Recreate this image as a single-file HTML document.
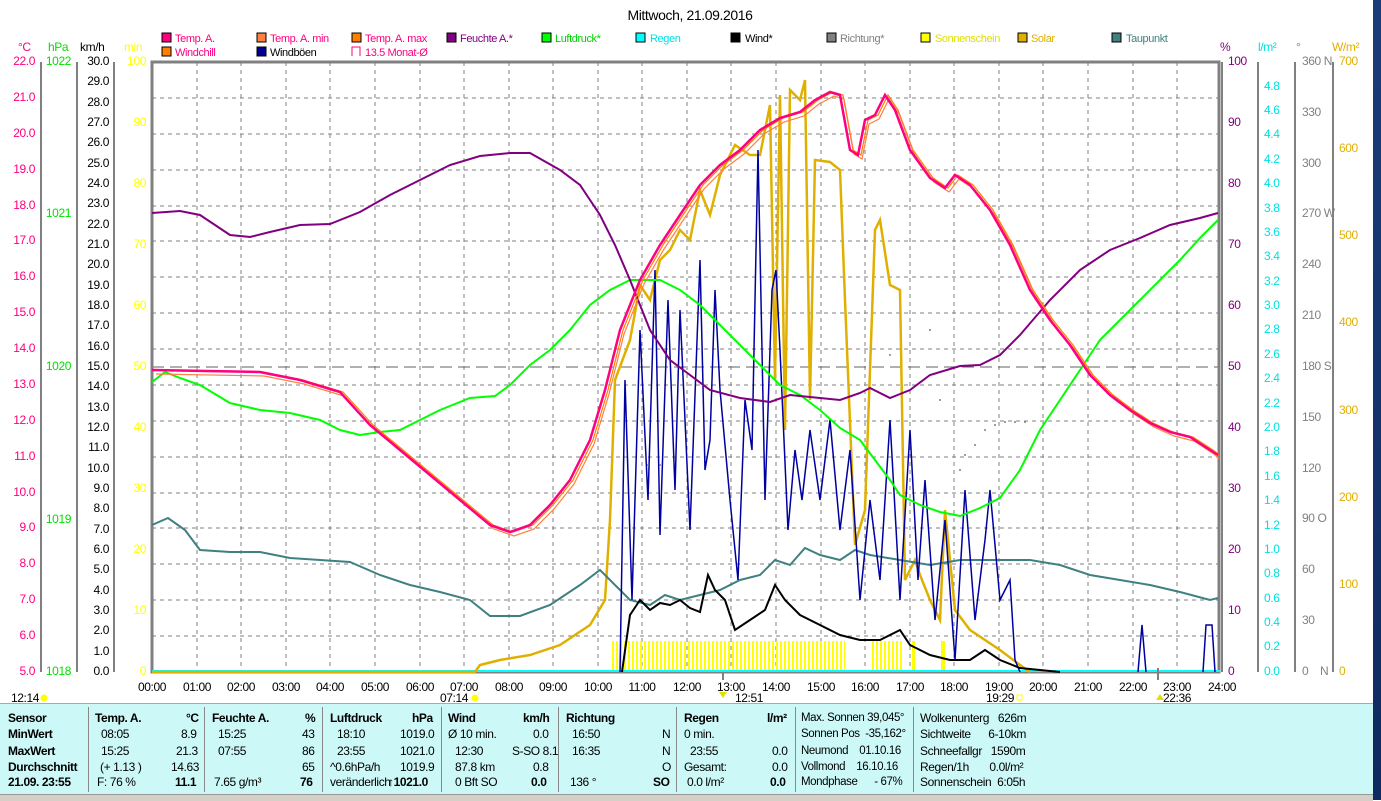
<!DOCTYPE html>
<html><head><meta charset="utf-8"><style>
html,body{margin:0;padding:0;width:1381px;height:800px;overflow:hidden;background:#fff;font-family:"Liberation Sans",sans-serif}
svg{position:absolute;left:0;top:0}
svg text{letter-spacing:-0.4px}
#tbl{position:absolute;left:0;top:703px;width:1373px;height:91px;background:#ccf8f8;border-top:1px solid #aaa}
#tbl span{position:absolute;font-size:12px;color:#000;white-space:nowrap;line-height:14px;letter-spacing:-0.4px}
#tbl .b{font-weight:bold}
.sep{position:absolute;top:3px;width:1px;height:85px;background:#888}
#status{position:absolute;left:0;top:794px;width:1373px;height:6px;background:#d4d0c8;border-top:1px solid #999}
#desk{position:absolute;left:1373px;top:0;width:8px;height:800px;background:linear-gradient(#1a3d7a,#0e2a60)}
</style></head><body>
<svg width="1381" height="800" font-family="Liberation Sans, sans-serif" font-size="12">
<text x="690" y="20" text-anchor="middle" font-size="14">Mittwoch, 21.09.2016</text>
<g font-size="11">
<rect x="162" y="33" width="9" height="9" fill="#ff0080" stroke="#000"/><text x="175" y="42" fill="#ff0080">Temp. A.</text>
<rect x="257" y="33" width="9" height="9" fill="#ff8040" stroke="#000"/><text x="270" y="42" fill="#ff0080">Temp. A. min</text>
<rect x="352" y="33" width="9" height="9" fill="#ff8000" stroke="#000"/><text x="365" y="42" fill="#ff0080">Temp. A. max</text>
<rect x="447" y="33" width="9" height="9" fill="#800080" stroke="#000"/><text x="460" y="42" fill="#800080">Feuchte A.*</text>
<rect x="542" y="33" width="9" height="9" fill="#00ff00" stroke="#000"/><text x="555" y="42" fill="#00d000">Luftdruck*</text>
<rect x="636" y="33" width="9" height="9" fill="#00ffff" stroke="#000"/><text x="650" y="42" fill="#00e0e0">Regen</text>
<rect x="731" y="33" width="9" height="9" fill="#000" stroke="#000"/><text x="745" y="42" fill="#000">Wind*</text>
<rect x="827" y="33" width="9" height="9" fill="#808080" stroke="#000"/><text x="840" y="42" fill="#808080">Richtung*</text>
<rect x="921" y="33" width="9" height="9" fill="#ffff00" stroke="#000"/><text x="935" y="42" fill="#e0e000">Sonnenschein</text>
<rect x="1018" y="33" width="9" height="9" fill="#e0b000" stroke="#000"/><text x="1031" y="42" fill="#e0b000">Solar</text>
<rect x="1112" y="33" width="9" height="9" fill="#408080" stroke="#000"/><text x="1126" y="42" fill="#408080">Taupunkt</text>
<rect x="162" y="47" width="9" height="9" fill="#ff8000" stroke="#000"/><text x="175" y="56" fill="#ff0080">Windchill</text>
<rect x="257" y="47" width="9" height="9" fill="#000090" stroke="#000"/><text x="270" y="56" fill="#000">Windböen</text>
<path d="M352 56V47h8v9" fill="none" stroke="#ff0080"/><text x="365" y="56" fill="#ff0080">13.5 Monat-Ø</text>
</g>
<text x="18" y="51" fill="#ff0080">°C</text><text x="48" y="51" fill="#00e000">hPa</text><text x="80" y="51">km/h</text><text x="124" y="51" fill="#ffff00">min</text>
<text x="1220" y="51" fill="#800080">%</text><text x="1258" y="51" fill="#00e0e0">l/m²</text><text x="1296" y="51" fill="#808080">°</text><text x="1332" y="51" fill="#e0b000">W/m²</text>
<g stroke="#808080" stroke-width="2">
<line x1="41" y1="62" x2="41" y2="672"/><line x1="77" y1="62" x2="77" y2="672"/><line x1="114" y1="62" x2="114" y2="672"/>
<line x1="1258" y1="62" x2="1258" y2="672"/><line x1="1295" y1="62" x2="1295" y2="672"/><line x1="1333" y1="62" x2="1333" y2="672"/>
</g>
<g stroke="#808080" stroke-dasharray="4,4" stroke-width="1">
<path d="M197 62V672M241 62V672M286 62V672M330 62V672M375 62V672M420 62V672M464 62V672M509 62V672M553 62V672M598 62V672M642 62V672M687 62V672M731 62V672M776 62V672M821 62V672M865 62V672M910 62V672M954 62V672M999 62V672M1043 62V672M1088 62V672M1133 62V672M1177 62V672"/>
<path d="M152 98H1220M152 134H1220M152 170H1220M152 206H1220M152 241H1220M152 277H1220M152 313H1220M152 349H1220M152 385H1220M152 421H1220M152 457H1220M152 493H1220M152 528H1220M152 564H1220M152 600H1220M152 636H1220"/>
</g>
<line x1="152" y1="367" x2="1220" y2="367" stroke="#606060" stroke-dasharray="12,6"/>
<rect x="152" y="62" width="1067" height="610" fill="none" stroke="#808080" stroke-width="3"/>
<line x1="1222" y1="62" x2="1222" y2="672" stroke="#808080" stroke-width="2"/>
<g fill="#ff0080" text-anchor="end" dominant-baseline="middle">
<text x="35" y="62">22.0</text><text x="35" y="98">21.0</text><text x="35" y="134">20.0</text><text x="35" y="170">19.0</text><text x="35" y="206">18.0</text><text x="35" y="241">17.0</text><text x="35" y="277">16.0</text><text x="35" y="313">15.0</text><text x="35" y="349">14.0</text><text x="35" y="385">13.0</text><text x="35" y="421">12.0</text><text x="35" y="457">11.0</text><text x="35" y="493">10.0</text><text x="35" y="528">9.0</text><text x="35" y="564">8.0</text><text x="35" y="600">7.0</text><text x="35" y="636">6.0</text><text x="35" y="672">5.0</text>
</g>
<g fill="#00e000" text-anchor="end" dominant-baseline="middle">
<text x="71" y="62">1022</text><text x="71" y="214">1021</text><text x="71" y="367">1020</text><text x="71" y="520">1019</text><text x="71" y="672">1018</text>
</g>
<g fill="#000" text-anchor="end" dominant-baseline="middle">
<text x="109" y="62">30.0</text><text x="109" y="82">29.0</text><text x="109" y="103">28.0</text><text x="109" y="123">27.0</text><text x="109" y="143">26.0</text><text x="109" y="164">25.0</text><text x="109" y="184">24.0</text><text x="109" y="204">23.0</text><text x="109" y="225">22.0</text><text x="109" y="245">21.0</text><text x="109" y="265">20.0</text><text x="109" y="286">19.0</text><text x="109" y="306">18.0</text><text x="109" y="326">17.0</text><text x="109" y="347">16.0</text><text x="109" y="367">15.0</text><text x="109" y="387">14.0</text><text x="109" y="408">13.0</text><text x="109" y="428">12.0</text><text x="109" y="448">11.0</text><text x="109" y="469">10.0</text><text x="109" y="489">9.0</text><text x="109" y="509">8.0</text><text x="109" y="530">7.0</text><text x="109" y="550">6.0</text><text x="109" y="570">5.0</text><text x="109" y="591">4.0</text><text x="109" y="611">3.0</text><text x="109" y="631">2.0</text><text x="109" y="652">1.0</text><text x="109" y="672">0.0</text>
</g>
<g fill="#ffff00" text-anchor="end" dominant-baseline="middle">
<text x="146" y="62">100</text><text x="146" y="123">90</text><text x="146" y="184">80</text><text x="146" y="245">70</text><text x="146" y="306">60</text><text x="146" y="367">50</text><text x="146" y="428">40</text><text x="146" y="489">30</text><text x="146" y="550">20</text><text x="146" y="611">10</text><text x="146" y="672">0</text>
</g>
<g fill="#800080" dominant-baseline="middle">
<text x="1228" y="62">100</text><text x="1228" y="123">90</text><text x="1228" y="184">80</text><text x="1228" y="245">70</text><text x="1228" y="306">60</text><text x="1228" y="367">50</text><text x="1228" y="428">40</text><text x="1228" y="489">30</text><text x="1228" y="550">20</text><text x="1228" y="611">10</text><text x="1228" y="672">0</text>
</g>
<g fill="#00e0e0" dominant-baseline="middle">
<text x="1264" y="87">4.8</text><text x="1264" y="111">4.6</text><text x="1264" y="135">4.4</text><text x="1264" y="160">4.2</text><text x="1264" y="184">4.0</text><text x="1264" y="209">3.8</text><text x="1264" y="233">3.6</text><text x="1264" y="257">3.4</text><text x="1264" y="282">3.2</text><text x="1264" y="306">3.0</text><text x="1264" y="330">2.8</text><text x="1264" y="355">2.6</text><text x="1264" y="379">2.4</text><text x="1264" y="404">2.2</text><text x="1264" y="428">2.0</text><text x="1264" y="452">1.8</text><text x="1264" y="477">1.6</text><text x="1264" y="501">1.4</text><text x="1264" y="526">1.2</text><text x="1264" y="550">1.0</text><text x="1264" y="574">0.8</text><text x="1264" y="599">0.6</text><text x="1264" y="623">0.4</text><text x="1264" y="647">0.2</text><text x="1264" y="672">0.0</text>
</g>
<g fill="#808080" dominant-baseline="middle">
<text x="1302" y="62">360 N</text><text x="1302" y="113">330</text><text x="1302" y="164">300</text><text x="1302" y="214">270 W</text><text x="1302" y="265">240</text><text x="1302" y="316">210</text><text x="1302" y="367">180 S</text><text x="1302" y="418">150</text><text x="1302" y="469">120</text><text x="1302" y="519">90 O</text><text x="1302" y="570">60</text><text x="1302" y="621">30</text><text x="1302" y="672">0</text><text x="1320" y="672">N</text>
</g>
<g fill="#e0b000" dominant-baseline="middle">
<text x="1339" y="62">700</text><text x="1339" y="149">600</text><text x="1339" y="236">500</text><text x="1339" y="323">400</text><text x="1339" y="411">300</text><text x="1339" y="498">200</text><text x="1339" y="585">100</text><text x="1339" y="672">0</text>
</g>
<defs><pattern id="sun" width="4" height="40" patternUnits="userSpaceOnUse"><rect width="2" height="40" fill="#ffff00"/></pattern></defs>
<rect x="610" y="641" width="235" height="31" fill="url(#sun)"/>
<rect x="872" y="641" width="30" height="31" fill="url(#sun)"/>
<rect x="912" y="641" width="3" height="31" fill="#ffff00"/><rect x="941" y="641" width="4" height="31" fill="#ffff00"/>
<line x1="152" y1="671" x2="1220" y2="671" stroke="#00ffff" stroke-width="2"/>
<polyline fill="none" stroke="#e0b000" stroke-width="2.5" points="152,672 475,672 480,665 500,660 530,655 560,645 590,625 605,600 610,520 615,380 630,340 640,285 650,300 660,260 670,250 680,230 690,240 700,190 710,215 720,175 735,145 750,155 760,155 770,105 775,380 780,95 785,430 790,90 800,100 805,80 810,400 815,160 830,162 840,170 845,300 855,545 865,510 875,230 880,220 890,285 900,290 905,580 915,560 920,575 930,600 940,620 945,510 955,610 970,630 1000,650 1020,665 1030,672"/>
<polyline fill="none" stroke="#408080" stroke-width="2" points="152,525 168,518 185,530 200,550 230,552 260,552 290,558 320,560 350,562 380,575 410,585 440,592 470,600 490,616 520,616 550,605 580,585 600,570 615,585 630,600 650,605 665,595 680,600 700,595 720,590 740,580 760,575 775,560 790,565 805,548 820,555 840,560 855,550 870,555 900,560 930,565 960,560 990,560 1030,560 1060,565 1090,575 1120,580 1150,585 1180,592 1210,600 1218,598"/>
<polyline fill="none" stroke="#0000a0" stroke-width="1.5" points="620,672 625,380 632,600 640,330 648,500 655,270 660,535 668,300 675,490 680,310 690,530 700,260 705,470 710,440 715,290 720,390 730,500 738,580 745,400 752,450 758,150 765,500 772,290 776,270 780,350 788,530 795,450 802,500 810,430 820,500 830,420 840,530 850,450 860,600 870,500 880,580 890,420 900,600 910,430 918,580 925,480 935,620 945,520 955,660 965,490 975,620 985,540 990,490 1000,600 1010,580 1015,660 1020,672"/>
<polyline fill="none" stroke="#0000a0" stroke-width="1.5" points="1138,672 1142,625 1146,672"/>
<polyline fill="none" stroke="#0000a0" stroke-width="1.5" points="1203,672 1206,625 1212,625 1215,672"/>
<polyline fill="none" stroke="#000" stroke-width="2" points="622,672 630,615 640,600 650,610 660,603 670,605 680,600 690,608 700,612 708,575 715,590 725,600 735,630 750,620 765,610 775,585 785,600 800,615 820,625 840,635 860,640 880,640 900,630 910,645 930,655 950,660 970,660 985,650 1000,660 1020,668 1040,670 1060,672"/>
<polyline fill="none" stroke="#00ff00" stroke-width="2" points="152,382 165,372 180,378 200,385 230,403 260,410 290,413 320,420 340,430 360,435 380,432 400,430 420,420 440,410 470,398 495,396 510,385 530,365 550,350 570,330 590,305 610,290 630,280 660,280 680,290 700,305 720,325 740,345 760,365 780,385 800,395 820,410 840,428 860,440 875,460 890,480 900,495 920,505 940,512 960,516 980,508 1000,498 1020,470 1040,430 1060,400 1080,370 1100,340 1120,320 1140,300 1160,280 1180,260 1200,238 1218,220"/>
<polyline fill="none" stroke="#800080" stroke-width="2" points="152,213 180,211 200,215 230,235 250,237 270,232 300,225 330,224 360,212 390,195 420,180 450,165 480,156 510,153 530,153 560,170 580,185 600,215 615,245 630,280 650,330 670,360 690,375 710,390 740,398 770,402 790,395 810,397 840,400 860,393 870,388 890,398 910,390 930,375 960,366 980,365 1000,355 1020,335 1050,300 1080,270 1110,250 1140,238 1170,225 1200,218 1218,213"/>
<polyline fill="none" stroke="#ff8000" stroke-width="1.2" transform="translate(3,-2)" points="152,372 260,374 300,382 340,394 370,427 400,452 430,477 460,502 490,527 510,534 530,527 550,507 570,482 590,442 605,392 620,332 640,282 660,247 680,217 700,187 720,167 740,152 760,132 780,120 800,114 815,102 830,94 840,97 850,152 858,157 865,122 875,117 885,97 895,112 910,152 930,180 945,190 955,177 970,187 990,212 1010,247 1030,292 1050,322 1070,347 1090,377 1110,397 1130,412 1150,425 1170,434 1190,439 1210,452 1216,457"/>
<polyline fill="none" stroke="#ff8040" stroke-width="1.2" transform="translate(4,4)" points="152,370 260,372 300,380 340,392 370,425 400,450 430,475 460,500 490,525 510,532 530,525 550,505 570,480 590,440 605,390 620,330 640,280 660,245 680,215 700,185 720,165 740,150 760,130 780,118 800,112 815,100 830,92 840,95 850,150 858,155 865,120 875,115 885,95 895,110 910,150 930,178 945,188 955,175 970,185 990,210 1010,245 1030,290 1050,320 1070,345 1090,375 1110,395 1130,410 1150,423 1170,432 1190,437 1210,450 1215,455"/>
<polyline fill="none" stroke="#ff0080" stroke-width="2.5" points="152,370 260,372 300,380 340,392 370,425 400,450 430,475 460,500 490,525 510,532 530,525 550,505 570,480 590,440 605,390 620,330 640,280 660,245 680,215 700,185 720,165 740,150 760,130 780,118 800,112 815,100 830,92 840,95 850,150 858,155 865,120 875,115 885,95 895,110 910,150 930,178 945,188 955,175 970,185 990,210 1010,245 1030,290 1050,320 1070,345 1090,375 1110,395 1130,410 1150,423 1170,432 1190,437 1210,450 1218,455"/>
<g fill="#808080"><circle cx="930" cy="330" r="1"/><circle cx="890" cy="355" r="1"/><circle cx="940" cy="400" r="1"/><circle cx="960" cy="470" r="1"/><circle cx="965" cy="455" r="1"/><circle cx="975" cy="445" r="1"/><circle cx="985" cy="430" r="1"/><circle cx="995" cy="425" r="1"/><circle cx="1005" cy="422" r="1"/><circle cx="1015" cy="422" r="1"/><circle cx="1025" cy="422" r="1"/><circle cx="648" cy="465" r="1"/><circle cx="660" cy="465" r="1"/></g>
<g text-anchor="middle"><text x="152" y="691">00:00</text><text x="197" y="691">01:00</text><text x="241" y="691">02:00</text><text x="286" y="691">03:00</text><text x="330" y="691">04:00</text><text x="375" y="691">05:00</text><text x="420" y="691">06:00</text><text x="464" y="691">07:00</text><text x="509" y="691">08:00</text><text x="553" y="691">09:00</text><text x="598" y="691">10:00</text><text x="642" y="691">11:00</text><text x="687" y="691">12:00</text><text x="731" y="691">13:00</text><text x="776" y="691">14:00</text><text x="821" y="691">15:00</text><text x="865" y="691">16:00</text><text x="910" y="691">17:00</text><text x="954" y="691">18:00</text><text x="999" y="691">19:00</text><text x="1043" y="691">20:00</text><text x="1088" y="691">21:00</text><text x="1133" y="691">22:00</text><text x="1177" y="691">23:00</text><text x="1222" y="691">24:00</text></g>
<text x="11" y="702">12:14</text><circle cx="44" cy="698" r="3.5" fill="#ffff00"/>
<text x="440" y="702">07:14</text><circle cx="475" cy="698" r="3.5" fill="#ffff00"/>
<text x="735" y="702">12:51</text><path d="M719 692l4 6 4-6z" fill="#e0e000"/>
<text x="986" y="702">19:29</text><rect x="1017" y="695" width="5" height="5" fill="none" stroke="#ffff00"/>
<text x="1163" y="702">22:36</text><path d="M1156 700l4-6 4 6z" fill="#e0e000"/>
<line x1="1158" y1="668" x2="1158" y2="680" stroke="#808080" stroke-width="2"/><line x1="723" y1="672" x2="723" y2="680" stroke="#808080" stroke-width="2"/>
</svg>
<div id="tbl">
<div class="sep" style="left:88px"></div><div class="sep" style="left:204px"></div><div class="sep" style="left:322px"></div><div class="sep" style="left:441px"></div><div class="sep" style="left:558px"></div><div class="sep" style="left:676px"></div><div class="sep" style="left:795px"></div><div class="sep" style="left:913px"></div>
<span class="b" style="left:8px;top:7px">Sensor</span><span class="b" style="left:8px;top:23px">MinWert</span><span class="b" style="left:8px;top:40px">MaxWert</span><span class="b" style="left:8px;top:56px">Durchschnitt</span><span class="b" style="left:8px;top:71px">21.09. 23:55</span>
<span class="b" style="left:95px;top:7px">Temp. A.</span><span class="b" style="left:186px;top:7px">°C</span>
<span style="left:101px;top:23px">08:05</span><span style="left:181px;top:23px">8.9</span>
<span style="left:101px;top:40px">15:25</span><span style="left:176px;top:40px">21.3</span>
<span style="left:100px;top:56px">(+ 1.13 )</span><span style="left:171px;top:56px">14.63</span>
<span style="left:97px;top:71px">F: 76 %</span><span class="b" style="left:175px;top:71px">11.1</span>
<span class="b" style="left:212px;top:7px">Feuchte A.</span><span class="b" style="left:305px;top:7px">%</span>
<span style="left:218px;top:23px">15:25</span><span style="left:302px;top:23px">43</span>
<span style="left:218px;top:40px">07:55</span><span style="left:302px;top:40px">86</span>
<span style="left:302px;top:56px">65</span>
<span style="left:214px;top:71px">7.65 g/m³</span><span class="b" style="left:300px;top:71px">76</span>
<span class="b" style="left:330px;top:7px">Luftdruck</span><span class="b" style="left:412px;top:7px">hPa</span>
<span style="left:337px;top:23px">18:10</span><span style="left:400px;top:23px">1019.0</span>
<span style="left:337px;top:40px">23:55</span><span style="left:400px;top:40px">1021.0</span>
<span style="left:330px;top:56px">^0.6hPa/h</span><span style="left:400px;top:56px">1019.9</span>
<span style="left:330px;top:71px">veränderlich</span><span class="b" style="left:388px;top:71px">↑1021.0</span>
<span class="b" style="left:448px;top:7px">Wind</span><span class="b" style="left:523px;top:7px">km/h</span>
<span style="left:448px;top:23px">Ø 10 min.</span><span style="left:533px;top:23px">0.0</span>
<span style="left:455px;top:40px">12:30</span><span style="left:512px;top:40px">S-SO 8.1</span>
<span style="left:455px;top:56px">87.8 km</span><span style="left:533px;top:56px">0.8</span>
<span style="left:455px;top:71px">0 Bft SO</span><span class="b" style="left:531px;top:71px">0.0</span>
<span class="b" style="left:566px;top:7px">Richtung</span>
<span style="left:572px;top:23px">16:50</span><span style="left:662px;top:23px">N</span>
<span style="left:572px;top:40px">16:35</span><span style="left:662px;top:40px">N</span>
<span style="left:662px;top:56px">O</span>
<span style="left:570px;top:71px">136 °</span><span class="b" style="left:653px;top:71px">SO</span>
<span class="b" style="left:684px;top:7px">Regen</span><span class="b" style="left:767px;top:7px">l/m²</span>
<span style="left:684px;top:23px">0 min.</span>
<span style="left:690px;top:40px">23:55</span><span style="left:772px;top:40px">0.0</span>
<span style="left:684px;top:56px">Gesamt:</span><span style="left:772px;top:56px">0.0</span>
<span style="left:687px;top:71px">0.0 l/m²</span><span class="b" style="left:770px;top:71px">0.0</span>
<span style="left:801px;top:7px;font-size:11.5px">Max. Sonnen 39,045°</span>
<span style="left:801px;top:23px;font-size:11.5px">Sonnen Pos&nbsp; -35,162°</span>
<span style="left:801px;top:40px;font-size:11.5px">Neumond&nbsp;&nbsp;&nbsp; 01.10.16</span>
<span style="left:801px;top:56px;font-size:11.5px">Vollmond&nbsp;&nbsp;&nbsp; 16.10.16</span>
<span style="left:801px;top:71px;font-size:11.5px">Mondphase&nbsp;&nbsp;&nbsp;&nbsp;&nbsp; - 67%</span>
<span style="left:920px;top:7px">Wolkenunterg&nbsp;&nbsp; 626m</span>
<span style="left:920px;top:23px">Sichtweite&nbsp;&nbsp;&nbsp;&nbsp;&nbsp; 6-10km</span>
<span style="left:920px;top:40px">Schneefallgr&nbsp;&nbsp; 1590m</span>
<span style="left:920px;top:56px">Regen/1h&nbsp;&nbsp;&nbsp;&nbsp;&nbsp;&nbsp; 0.0l/m²</span>
<span style="left:920px;top:71px">Sonnenschein&nbsp; 6:05h</span>
</div>
<div id="status"></div>
<div id="desk"></div>
</body></html>
